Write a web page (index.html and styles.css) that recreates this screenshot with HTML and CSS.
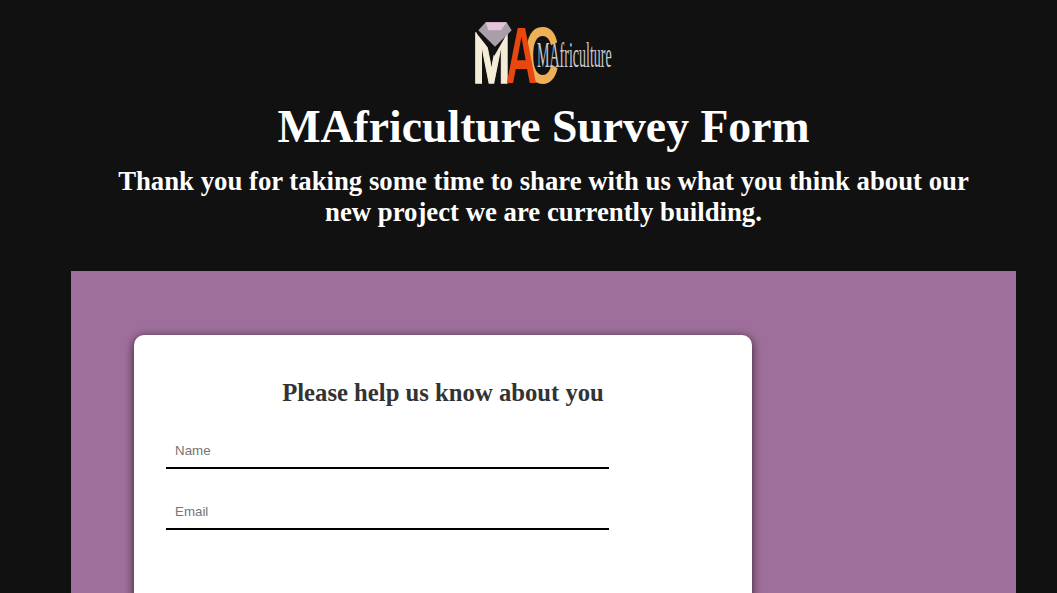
FILE: index.html
```html
<!DOCTYPE html>
<html lang="en">
<head>
  <meta charset="UTF-8">
  <title>MAfriculture Survey Form</title>
  <link rel="stylesheet" href="styles.css">
</head>
<body>
  <header class="header">
    <svg class="logo" width="137" height="62" viewBox="30 21 411 186">
      <text class="logo-c" x="178" y="203" textLength="104" lengthAdjust="spacingAndGlyphs">C</text>
      <text class="logo-m" x="23" y="205" textLength="112" lengthAdjust="spacingAndGlyphs">M</text>
      <text class="logo-a" x="122" y="205" textLength="94" lengthAdjust="spacingAndGlyphs">A</text>
      <polygon points="30,40 130,40 125,58 88,122 36,56" fill="#111111"/>
      <polygon points="40,46 62,22 125,22 140,46 90,95" fill="#a99ea9"/>
      <polygon points="62,22 125,22 108,46 70,46" fill="#e3c4da"/>
      <text class="logo-name" x="216" y="155" textLength="224" lengthAdjust="spacingAndGlyphs">MAfriculture</text>
    </svg>
    <h1 class="title">MAfriculture Survey Form</h1>
    <p class="subtitle">Thank you for taking some time to share with us what you think about our new project we are currently building.</p>
  </header>

  <main class="survey">
    <form class="card">
      <h2 class="card-title">Please help us know about you</h2>
      <input class="field" type="text" placeholder="Name">
      <input class="field" type="email" placeholder="Email">
    </form>
  </main>
</body>
</html>
```

FILE: styles.css
```css
html, body {
  height: 593px;
  overflow: hidden;
}

body {
  margin: 0;
  background-color: #111111;
  font-family: "Liberation Serif", serif;
}

/* header */
.header {
  padding: 22px 64px 0 94px;
  text-align: center;
  color: #FFFFFF;
}

.logo {
  display: block;
  margin: 0 auto;
  overflow: visible;
}

.logo text {
  font-family: "Liberation Sans", sans-serif;
  font-weight: bold;
}

.logo-m {
  font-size: 218px;
  fill: #F5ECD8;
  stroke: #F5ECD8;
  stroke-width: 5px;
}

.logo-a {
  font-size: 240px;
  fill: #E8470F;
}

.logo-c {
  font-size: 240px;
  fill: #EDB058;
}

.logo .logo-name {
  font-family: "Liberation Serif", serif;
  font-weight: normal;
  font-size: 106px;
  fill: #C9C9C9;
}

.title {
  margin: 14px 0 0;
  font-size: 45.7px;
  line-height: 58px;
}

.subtitle {
  margin: 10px 0 0;
  font-size: 26.75px;
  line-height: 31px;
  font-weight: bold;
}

/* survey */
.survey {
  margin: 43px 41px 0 71px;
  padding: 64px 63px;
  height: 400px;
  background-color: #9E6F9A;
}

.card {
  box-sizing: border-box;
  width: 618px;
  height: 400px;
  padding: 0 32px;
  background-color: #FFFFFF;
  border-radius: 10px;
  box-shadow: 0 2px 10px rgba(0, 0, 0, 0.7);
}

.card-title {
  margin: 0 0 25px;
  padding-top: 42px;
  text-align: center;
  font-size: 24.7px;
  line-height: 32px;
  color: #333333;
}

.field {
  display: block;
  box-sizing: border-box;
  width: 443px;
  height: 35px;
  margin-bottom: 26px;
  padding: 0 9px;
  border: 0;
  border-bottom: 2px solid #000000;
  outline: none;
  background: transparent;
  font-family: "Liberation Sans", sans-serif;
  font-size: 13.33px;
}
```
